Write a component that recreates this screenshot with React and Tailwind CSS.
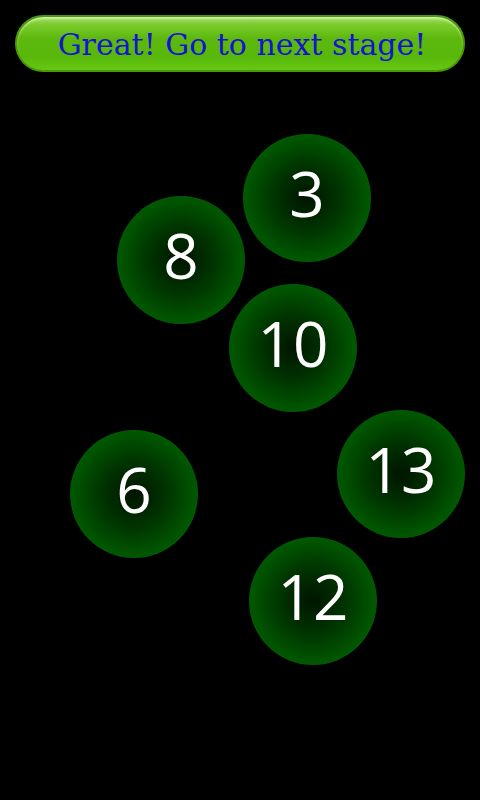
import React from "react";

const BALLS = [
  { n: 3, x: 307, y: 198 },
  { n: 8, x: 181, y: 260 },
  { n: 10, x: 293, y: 348 },
  { n: 6, x: 134, y: 494 },
  { n: 13, x: 401, y: 474 },
  { n: 12, x: 313, y: 601 },
];

const App = () => {
  return (
    <div className="w-[480px] h-[800px] bg-black relative overflow-hidden">
      {/* top button */}
      <div className="px-[15px] pt-[15px]">
        <button className="w-full h-[57px] rounded-full border-2 border-[#4a9a08] bg-[linear-gradient(to_bottom,#a6e070_0%,#7ccc2c_14%,#5db80e_40%,#58b80a_75%,#66c814_100%)] shadow-[inset_0_2px_2px_rgba(255,255,255,0.45)] flex items-center justify-center">
          <span className="text-[30px] leading-none text-[#1414d0] font-['DejaVu_Serif',serif] pl-[4px] pt-[3px]">
            Great! Go to next stage!
          </span>
        </button>
      </div>

      {/* number balls */}
      {BALLS.map((b) => (
        <div
          key={b.n}
          className="absolute w-[128px] h-[128px] rounded-full bg-[radial-gradient(circle,#001500_0%,#003300_35%,#005e00_75%,#008000_96%,#006800_100%)] flex items-center justify-center"
          style={{ left: b.x - 64, top: b.y - 64 }}
        >
          <span className="text-white text-[62px] leading-none font-['Open_Sans',sans-serif] pb-[10px]">
            {b.n}
          </span>
        </div>
      ))}
    </div>
  );
};

export default App;
